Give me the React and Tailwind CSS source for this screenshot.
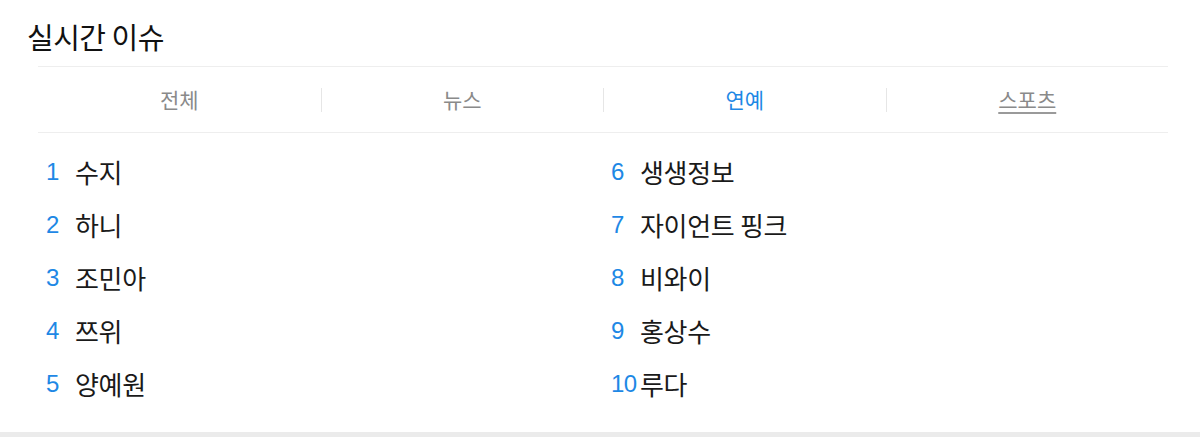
import React from 'react';

const tabs = ['전체', '뉴스', '연예', '스포츠'];

const issues = [
  '수지',
  '하니',
  '조민아',
  '쯔위',
  '양예원',
  '생생정보',
  '자이언트 핑크',
  '비와이',
  '홍상수',
  '루다',
];

const IssueItem = ({ rank, title }) => (
  <li className="flex items-center h-[53px] pl-[8px]">
    <span className="w-[29px] text-[24px] tracking-[-0.5px] text-[#1e88e5] font-['Liberation_Sans','Noto_Sans_CJK_KR',sans-serif] leading-none">
      {rank}
    </span>
    <span className="text-[26px] text-[#1a1a1a] leading-none tracking-[-0.3px]">{title}</span>
  </li>
);

export default function App() {
  const active = 2;
  const left = issues.slice(0, 5);
  const right = issues.slice(5);

  return (
    <div className="w-[1200px] h-[437px] bg-white flex flex-col font-['Noto_Sans_CJK_KR',sans-serif]">
      {/* 제목 */}
      <h2 className="h-[66px] pl-[27px] pt-[15px] text-[29px] leading-[42px] font-normal text-[#111] tracking-[-0.5px]">
        실시간 이슈
      </h2>

      <div className="mx-[38px] w-[1130px]">
        {/* 탭 */}
        <ul className="flex items-center h-[67px] border-y border-[#eeeeee]">
          {tabs.map((tab, i) => (
            <li key={tab} className="flex-1 flex items-center h-full">
              {i > 0 && <span className="w-px h-[24px] bg-[#e6e6e6]" />}
              <span
                className={
                  'flex-1 text-center text-[21px] leading-none ' +
                  (i === active
                    ? 'text-[#1e88e5]'
                    : i === 3
                    ? 'text-[#8a8a8a] underline underline-offset-[4px] decoration-[#9a9a9a]'
                    : 'text-[#8a8a8a]')
                }
              >
                {tab}
              </span>
            </li>
          ))}
        </ul>

        {/* 순위 목록 */}
        <div className="grid grid-cols-2 pt-[12px]">
          <ol>
            {left.map((t, i) => (
              <IssueItem key={t} rank={i + 1} title={t} />
            ))}
          </ol>
          <ol>
            {right.map((t, i) => (
              <IssueItem key={t} rank={i + 6} title={t} />
            ))}
          </ol>
        </div>
      </div>

      <div className="mt-auto h-[5px] bg-[#ebebeb]" />
    </div>
  );
}
